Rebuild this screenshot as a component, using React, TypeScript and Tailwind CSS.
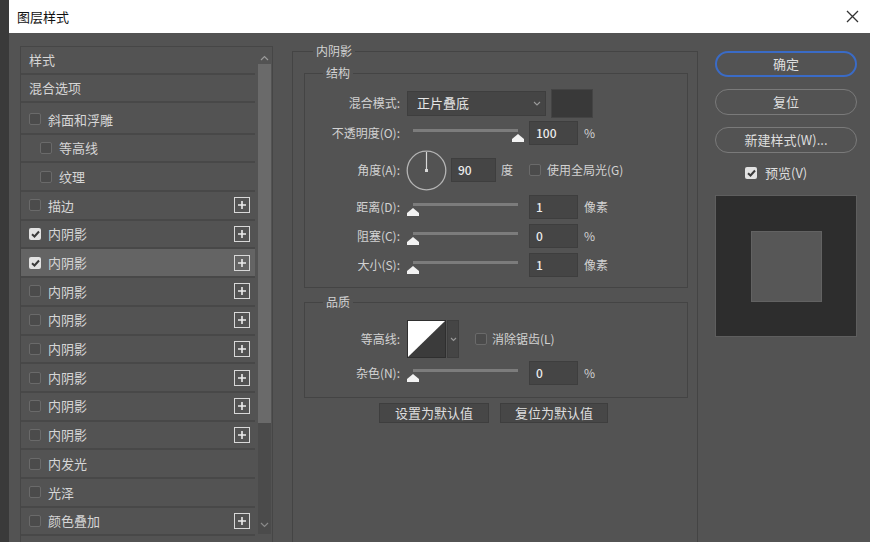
import React from 'react';

// 图层样式 dialog — Photoshop layer style (内阴影)

type Row = {
  label: string;
  check?: 'on' | 'off' | null;
  sub?: boolean;
  plus?: boolean;
  selected?: boolean;
};

const rows: Row[] = [
  { label: '斜面和浮雕', check: 'off' },
  { label: '等高线', check: 'off', sub: true },
  { label: '纹理', check: 'off', sub: true },
  { label: '描边', check: 'off', plus: true },
  { label: '内阴影', check: 'on', plus: true },
  { label: '内阴影', check: 'on', plus: true, selected: true },
  { label: '内阴影', check: 'off', plus: true },
  { label: '内阴影', check: 'off', plus: true },
  { label: '内阴影', check: 'off', plus: true },
  { label: '内阴影', check: 'off', plus: true },
  { label: '内阴影', check: 'off', plus: true },
  { label: '内阴影', check: 'off', plus: true },
  { label: '内发光', check: 'off' },
  { label: '光泽', check: 'off' },
  { label: '颜色叠加', check: 'off', plus: true },
];

function Checkbox({ checked = false }: { checked?: boolean }) {
  if (checked) {
    return (
      <span className="flex h-[12px] w-[12px] shrink-0 items-center justify-center rounded-[2px] bg-[#e2e2e2]">
        <svg width="9" height="8" viewBox="0 0 9 8">
          <path d="M1 4.2 L3.5 6.5 L8 1.5" stroke="#3a3a3a" strokeWidth="2" fill="none" />
        </svg>
      </span>
    );
  }
  return <span className="block h-[12px] w-[12px] shrink-0 rounded-[2px] border border-[#6a6a6a] bg-[#4b4b4b]" />;
}

function PlusBox() {
  return (
    <span className="flex h-[16px] w-[16px] items-center justify-center border border-[#d8d8d8]">
      <svg width="10" height="10" viewBox="0 0 10 10">
        <path d="M5 1v8M1 5h8" stroke="#ececec" strokeWidth="1.6" />
      </svg>
    </span>
  );
}

function Slider({ value }: { value: number }) {
  return (
    <div className="relative h-[20px] w-[112px] shrink-0">
      <div className="absolute left-[6px] top-[6px] h-[3px] w-[105px] bg-[#7c7c7c]" />
      <svg className="absolute top-[11px]" style={{ left: value * 105 }} width="12" height="8" viewBox="0 0 12 8">
        <polygon points="6,0 12,5 12,8 0,8 0,5" fill="#f2f2f2" />
      </svg>
    </div>
  );
}

function NumBox({ value, w = 'w-[49px]' }: { value: string; w?: string }) {
  return (
    <div className={`flex h-[24px] ${w} shrink-0 items-center border border-[#3e3e3e] bg-[#454545] pl-[6px] text-[12px] font-medium text-[#ececec]`}>
      {value}
    </div>
  );
}

function SliderRow({ label, value, pos, unit, h }: { label: string; value: string; pos: number; unit: string; h: string }) {
  return (
    <div className={`flex ${h} items-center`}>
      <div className="w-[95px] shrink-0 text-right">{label}</div>
      <div className="ml-[7px]">
        <Slider value={pos} />
      </div>
      <div className="ml-[10px]">
        <NumBox value={value} />
      </div>
      <span className="ml-[6px]">{unit}</span>
    </div>
  );
}

function PillButton({ children, primary = false }: { children: React.ReactNode; primary?: boolean }) {
  return (
    <div
      className={`flex h-[26px] w-[142px] items-center justify-center rounded-full text-[13px] text-[#dedede] ${
        primary ? 'border-2 border-[#3a6bc6]' : 'border border-[#7a7a7a]'
      }`}
    >
      {children}
    </div>
  );
}

export default function App() {
  return (
    <div className="flex h-[542px] w-[870px] overflow-hidden bg-[#393939] font-['Noto_Sans_CJK_SC',sans-serif] text-[12px] text-[#d2d2d2]">
      {/* 左侧背景条 */}
      <div className="w-[9px] shrink-0 bg-[#3a3a3a]" />

      <div className="flex flex-1 flex-col bg-[#535353]">
        {/* 标题栏 */}
        <div className="flex h-[33px] shrink-0 items-center justify-between bg-white pl-[8px] pr-[11px]">
          <span className="text-[13px] text-[#111]">图层样式</span>
          <svg width="13" height="13" viewBox="0 0 13 13">
            <path d="M1 1 L12 12 M12 1 L1 12" stroke="#333" strokeWidth="1.3" />
          </svg>
        </div>

        <div className="flex flex-1 items-start pl-[11px]">
          {/* 样式列表 */}
          <div className="mt-[13px] flex h-[500px] w-[253px] shrink-0 overflow-hidden border border-[#464646]">
            <div className="flex w-[234px] shrink-0 flex-col text-[13px] text-[#d6d6d6]">
              <div className="flex h-[28px] shrink-0 items-center border-b-2 border-[#484848] pl-[8px]">样式</div>
              <div className="flex h-[28px] shrink-0 items-center border-b-2 border-[#484848] pl-[8px]">混合选项</div>
              <div className="h-[3px] shrink-0" />
              {rows.map((r, i) => (
                <div
                  key={i}
                  className={`flex h-[28.7px] shrink-0 items-center border-b-2 border-[#484848] pr-[5px] ${
                    r.selected ? 'bg-[#646464]' : ''
                  } ${r.sub ? 'pl-[19px]' : 'pl-[8px]'}`}
                >
                  <Checkbox checked={r.check === 'on'} />
                  <span className="ml-[7px] flex-1">{r.label}</span>
                  {r.plus && <PlusBox />}
                </div>
              ))}
              <div className="h-[28.7px] shrink-0" />
            </div>
            {/* 滚动条 */}
            <div className="ml-[1px] flex w-[17px] shrink-0 flex-col items-center">
              <svg className="mt-[8px] shrink-0" width="9" height="6" viewBox="0 0 9 6">
                <path d="M1 5 L4.5 1.5 L8 5" stroke="#9a9a9a" strokeWidth="1.2" fill="none" />
              </svg>
              <div className="mt-[3px] flex h-[470px] w-[13px] shrink-0 flex-col bg-[#4b4b4b]">
                <div className="h-[359px] w-full shrink-0 bg-[#6a6a6a]" />
                <div className="flex-1" />
                <svg className="mx-auto mb-[6px] shrink-0" width="9" height="6" viewBox="0 0 9 6">
                  <path d="M1 1 L4.5 4.5 L8 1" stroke="#8a8a8a" strokeWidth="1.2" fill="none" />
                </svg>
              </div>
            </div>
          </div>

          {/* 内阴影 设置 */}
          <div className="ml-[19px] mt-[9px] w-[406px] shrink-0">
            <fieldset className="h-[520px] border border-[#444]">
              <legend className="ml-[20px] px-[3px] leading-[18px]">内阴影</legend>

              <fieldset className="ml-[11px] mt-[4px] w-[384px] border border-[#444]">
                <legend className="ml-[18px] px-[3px] leading-[18px]">结构</legend>
                <div className="flex flex-col pb-[8px] pt-[6px]">
                  <div className="flex h-[30px] items-center">
                    <div className="w-[95px] shrink-0 text-right">混合模式:</div>
                    <div className="ml-[7px] flex h-[25px] w-[139px] items-center justify-between border border-[#3e3e3e] bg-[#454545] pl-[9px] pr-[4px] text-[13px] text-[#e6e6e6]">
                      正片叠底
                      <svg width="8" height="5" viewBox="0 0 8 5">
                        <path d="M1 1 L4 4 L7 1" stroke="#9a9a9a" strokeWidth="1.1" fill="none" />
                      </svg>
                    </div>
                    <div className="ml-[5px] h-[29px] w-[42px] border border-[#444] bg-[#393939]" />
                  </div>

                  <SliderRow label="不透明度(O):" value="100" pos={1} unit="%" h="h-[30px]" />

                  <div className="flex h-[44px] items-center">
                    <div className="w-[95px] shrink-0 text-right">角度(A):</div>
                    <svg className="ml-[6px] shrink-0" width="41" height="41" viewBox="0 0 41 41">
                      <circle cx="20.5" cy="20.5" r="19.3" stroke="#b4b4b4" strokeWidth="1.3" fill="none" />
                      <path d="M20.5 2 V20.5" stroke="#d8d8d8" strokeWidth="1.2" />
                      <rect x="19" y="19" width="3" height="3" fill="#d8d8d8" />
                    </svg>
                    <div className="ml-[4px]">
                      <NumBox value="90" w="w-[45px]" />
                    </div>
                    <span className="ml-[5px]">度</span>
                    <span className="ml-[16px]">
                      <Checkbox />
                    </span>
                    <span className="ml-[6px]">使用全局光(G)</span>
                  </div>

                  <SliderRow label="距离(D):" value="1" pos={0} unit="像素" h="h-[29px]" />
                  <SliderRow label="阻塞(C):" value="0" pos={0} unit="%" h="h-[29px]" />
                  <SliderRow label="大小(S):" value="1" pos={0} unit="像素" h="h-[29px]" />
                </div>
              </fieldset>

              <fieldset className="ml-[11px] mt-[5px] w-[384px] border border-[#444]">
                <legend className="ml-[18px] px-[3px] leading-[18px]">品质</legend>
                <div className="flex flex-col pb-[11px] pt-[7px]">
                  <div className="flex h-[42px] items-center">
                    <div className="w-[95px] shrink-0 text-right">等高线:</div>
                    <svg className="ml-[7px] shrink-0" width="39" height="38" viewBox="0 0 39 38">
                      <rect x="0" y="0" width="39" height="38" fill="#3b3b3b" />
                      <polygon points="1,1 38,1 1,37" fill="#ffffff" />
                      <rect x="0.5" y="0.5" width="38" height="37" fill="none" stroke="#2f2f2f" />
                    </svg>
                    <div className="ml-[1px] flex h-[38px] w-[12px] items-center justify-center border border-[#3e3e3e] bg-[#454545]">
                      <svg width="7" height="5" viewBox="0 0 7 5">
                        <path d="M1 1 L3.5 3.5 L6 1" stroke="#9a9a9a" strokeWidth="1.1" fill="none" />
                      </svg>
                    </div>
                    <span className="ml-[16px]">
                      <Checkbox />
                    </span>
                    <span className="ml-[5px]">消除锯齿(L)</span>
                  </div>
                  <SliderRow label="杂色(N):" value="0" pos={0} unit="%" h="h-[26px]" />
                </div>
              </fieldset>

              <div className="ml-[86px] mt-[5px] flex gap-[11px] text-[13px] text-[#dedede]">
                <div className="flex h-[20px] w-[110px] items-center justify-center border border-[#3e3e3e] bg-[#474747]">设置为默认值</div>
                <div className="flex h-[20px] w-[108px] items-center justify-center border border-[#3e3e3e] bg-[#474747]">复位为默认值</div>
              </div>
            </fieldset>
          </div>

          {/* 右侧按钮和预览 */}
          <div className="ml-[17px] mt-[18px] flex w-[142px] shrink-0 flex-col">
            <PillButton primary>确定</PillButton>
            <div className="mt-[12px]">
              <PillButton>复位</PillButton>
            </div>
            <div className="mt-[12px]">
              <PillButton>新建样式(W)...</PillButton>
            </div>
            <div className="mt-[14px] flex h-[12px] items-center pl-[30px] text-[13px] text-[#dedede]">
              <Checkbox checked />
              <span className="ml-[8px]">预览(V)</span>
            </div>
            <div className="mt-[16px] flex h-[142px] w-[142px] items-center justify-center border border-[#5e5e5e] bg-[#2d2d2d]">
              <div className="h-[71px] w-[71px] border border-[#626262] bg-[#575757]" />
            </div>
          </div>
        </div>
      </div>
    </div>
  );
}
